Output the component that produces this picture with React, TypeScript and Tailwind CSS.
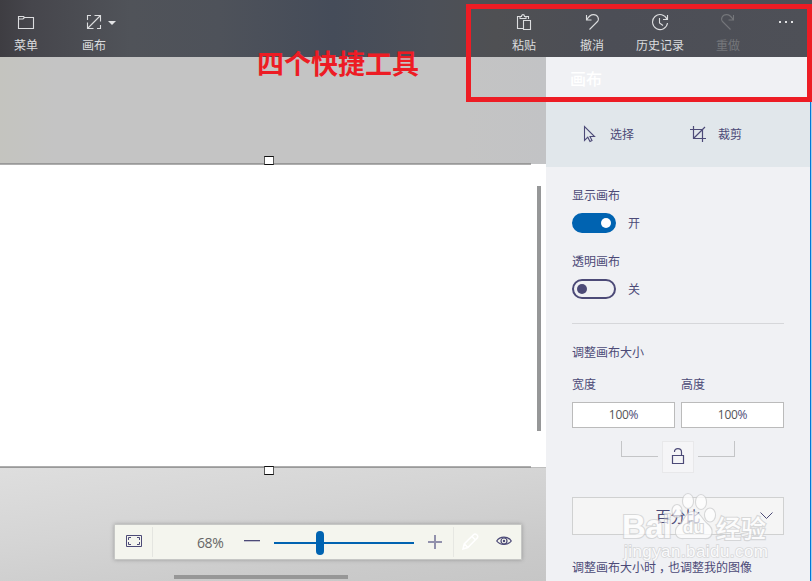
import type { ReactNode } from "react";

const ink = "#4c4a77";

function Tool({ label, muted, children }: { label: string; muted?: boolean; children: ReactNode }) {
  return (
    <button className={`flex w-[68px] flex-col items-center pt-3 ${muted ? "text-[#74767a]" : "text-[#dcdddf]"}`}>
      <span className="flex h-5 items-center">{children}</span>
      <span className="mt-1 text-[12px] leading-[18px]">{label}</span>
    </button>
  );
}

function Glyph({ children }: { children: ReactNode }) {
  return (
    <svg width="18" height="18" viewBox="0 0 18 18" fill="none" stroke="currentColor" strokeWidth="1.1">
      {children}
    </svg>
  );
}

function Header() {
  return (
    <header className="relative flex h-[57px] shrink-0 bg-[linear-gradient(90deg,#3e3d42_0%,#46464c_4%,#505359_16%,#4e525a_27%,#454c59_41%,#4c5058_53%,#4f5053_61%,#4c4e56_75%,#4e5057_100%)]">
      <div className="-ml-2 flex">
        <Tool label="菜单">
          <Glyph>
            <path d="M1.500 3.500h5l1 1h9v11h-15zM1.500 6h4.500l1.500-1.500" />
          </Glyph>
        </Tool>
        <div className="relative flex">
          <Tool label="画布">
            <Glyph>
              <path d="M2.500 7V2.500H6M9.500 2.500h6v6M15.500 12v3.500H12M8.500 15.500h-6v-6M3 15L15 3" />
            </Glyph>
          </Tool>
          <svg className="absolute left-12 top-[21px]" width="8" height="4" viewBox="0 0 8 4" fill="#e2e3e5">
            <path d="M0 0h8L4 4z" />
          </svg>
        </div>
      </div>
      <div className="ml-auto flex pr-[50px]">
        <Tool label="粘贴">
          <Glyph>
            <path d="M5 3.500H2.500v12H8M11 3.500h2.500V6M5 5.500v-2h1.500C6.500 1 9.500 1 9.500 3.500H11v2zM8.500 7.500h7v9h-7z" />
          </Glyph>
        </Tool>
        <Tool label="撤消">
          <Glyph>
            <path d="M3.500 2v5h5M3.700 6.700C6 3 8 1.500 10.500 1.600c4.300.1 6.500 4.400 3.500 7.400L6.500 16.500" />
          </Glyph>
        </Tool>
        <Tool label="历史记录">
          <Glyph>
            <path d="M16.500 2v4.500H12M16 6.200A7.500 7.500 0 1 0 16.500 10M8.500 5v5l3.500 2.500" />
          </Glyph>
        </Tool>
        <Tool label="重做" muted>
          <Glyph>
            <path d="M14.500 2v5h-5M14.300 6.700C12 3 10 1.500 7.500 1.600c-4.300.1-6.500 4.400-3.500 7.400L11.500 16.500" />
          </Glyph>
        </Tool>
      </div>
      <div className="absolute left-[779px] top-[21px] flex gap-1">
        <i className="size-[2px] bg-[#e2e3e5]" />
        <i className="size-[2px] bg-[#e2e3e5]" />
        <i className="size-[2px] bg-[#e2e3e5]" />
      </div>
    </header>
  );
}

function Handle({ className }: { className: string }) {
  return <i className={`absolute left-[264px] h-[9px] w-[10px] border border-x-[#555] border-y-[#111] bg-white ${className}`} />;
}

function ZoomBar() {
  return (
    <div className="ml-[114px] mt-[56px] flex h-[36px] w-[408px] items-center border border-[#c6c7c5] bg-[#f4f5ee] shadow-[0_0_4px_rgba(0,0,0,0.25)]">
      <div className="flex h-[30px] w-[38px] items-center justify-center border-r border-[#e4e5e0]">
        <svg width="16" height="12" viewBox="0 0 16 12" fill="none" stroke={ink} className="-mt-[2px]">
          <path d="M.5.500h15v11H.5zM2.500 5V2.500H5M11 2.500h2.500V5M13.500 7v2.500H11M5 9.500H2.500V7" />
        </svg>
      </div>
      <span className="ml-[44px] w-[29px] whitespace-nowrap pt-px font-['Open_Sans','Noto_Sans',sans-serif] text-[14px] leading-5 tracking-[-0.4px] text-[#666]">68%</span>
      <i className="-mt-[2px] ml-[18px] h-[2px] w-4 border-b border-[#c0bfcb] bg-[#4c4a77]" />
      <div className="relative ml-[14px] mt-[2px] h-[2px] w-[140px] bg-[#0063b1]">
        <i className="absolute -top-[11px] left-[42px] h-6 w-2 rounded-full bg-[#0063b1]" />
      </div>
      <svg className="ml-[14px]" width="14" height="14" viewBox="0 0 14 14" fill="none" stroke="#9291ac" strokeWidth="2">
        <path d="M7 0v14M0 7h14" />
      </svg>
      <div className="ml-[11px] flex h-[30px] grow items-center border-l border-[#e6e7e2]">
        <svg className="-mt-[2px] ml-2" width="17" height="17" viewBox="0 0 17 17" fill="none" stroke="#fff" strokeWidth="1.500">
          <path d="M1 16l1.200-5L11.500 1.700c2-2 5.500 1 3.700 3.400L5.800 14.500zM10 3.500l3.500 3.500M2.500 11l3.300 3.500" />
        </svg>
        <svg className="-mt-[2px] ml-[17px]" width="16" height="10" viewBox="0 0 16 10" fill="none" stroke={ink} strokeWidth="1.200">
          <path d="M.7 5C4-.1 12-.1 15.300 5 12 9.500 4 9.500.7 5z" />
          <circle cx="8" cy="5" r="3" />
          <circle cx="8" cy="5" r=".6" />
        </svg>
      </div>
    </div>
  );
}

function Workspace() {
  return (
    <main className="relative flex w-[546px] shrink-0 flex-col">
      <div className="h-[107px] shrink-0 bg-[linear-gradient(90deg,#c4c4bf_0%,#c4c4c4_10%,#c4c4c4_85%,#c2c3c5_100%)]" />
      <div className="relative h-[303px] shrink-0 bg-white">
        <i className="absolute -top-px left-0 h-[2px] w-[531px] border-t border-[#999] bg-[#aeaeae]" />
        <i className="absolute left-[537px] top-[22px] h-[245px] w-1 bg-[#969798]" />
        <i className="absolute bottom-[-1px] left-0 h-[2px] w-[531px] border-b border-[#999] bg-[#aeaeae]" />
        <Handle className="-top-[8px]" />
        <Handle className="-bottom-[8px]" />
      </div>
      <div className="grow border-t border-[#bebebe] bg-[linear-gradient(172deg,#dedede_0%,#d5d5d5_40%,#cacaca_80%,#c6c6c6_100%)]">
        <ZoomBar />
        <div className="ml-[174px] mt-[15px] h-1 w-[174px] bg-[#979797]" />
      </div>
    </main>
  );
}

function Toggle({ on, label }: { on?: boolean; label: string }) {
  return (
    <div className="flex h-5 items-center gap-3">
      <span className={`flex h-5 w-11 items-center rounded-full border-2 ${on ? "justify-end border-[#0063b1] bg-[#0063b1] pr-[3px]" : "border-[#4c4a77] pl-[3px]"}`}>
        <i className={`size-[10px] rounded-full ${on ? "bg-white" : "bg-[#4c4a77]"}`} />
      </span>
      <span>{label}</span>
    </div>
  );
}

function SizeField({ label }: { label: string }) {
  return (
    <label className="w-[103px]">
      <span className="block">{label}</span>
      <span className="mt-[9px] flex h-[26px] items-center justify-center border border-[#bbb] bg-white font-['Open_Sans','Noto_Sans',sans-serif] text-[12px] tracking-[-0.3px] text-[#555]">
        100<span className="text-[#4c4a77]">%</span>
      </span>
    </label>
  );
}

function Panel() {
  return (
    <aside className="flex w-[264px] shrink-0 flex-col bg-[#f0f1f4] text-[12px] leading-[18px] text-[#4c4a77]">
      <h2 className="h-[45px] shrink-0 pl-6 pt-[9px] text-[16px] font-medium leading-6 text-white">画布</h2>
      <div className="flex h-[65px] shrink-0 items-center bg-[#e1e7eb] pb-[2px] pl-[34px]">
        <svg width="18" height="18" viewBox="0 0 18 18" fill="none" stroke={ink} strokeWidth="1.100">
          <path d="M4.500 1.500v14l3.300-3.300L10 16.500l2-1-2-4h4.500z" />
        </svg>
        <span className="ml-3">选择</span>
        <svg className="ml-[55px]" width="18" height="18" viewBox="0 0 18 18" fill="none" stroke={ink} strokeWidth="1.200">
          <path d="M4.500 1v12.500H17M1 4.500h12.500V17M4.500 13.500L16 2" />
        </svg>
        <span className="ml-[11px]">裁剪</span>
      </div>
      <div className="flex flex-col pl-[26px] pt-[19px]">
        <span>显示画布</span>
        <div className="mt-[9px]"><Toggle on label="开" /></div>
        <span className="mt-[19px]">透明画布</span>
        <div className="mt-[9px]"><Toggle label="关" /></div>
        <hr className="mt-6 w-[212px] border-[#d6d7da]" />
        <span className="mt-[19px]">调整画布大小</span>
        <div className="mt-[14px] flex gap-[6px]">
          <SizeField label="宽度" />
          <SizeField label="高度" />
        </div>
        <div className="ml-[49px] mt-[13px] flex h-8">
          <i className="h-4 w-[37px] border-b border-l border-[#c4c5c7]" />
          <span className="ml-1 flex size-8 items-center justify-center border border-[#e8e8ea] bg-[#f5f5f7] pb-[2px]">
            <svg width="14" height="18" viewBox="0 0 14 18" fill="none" stroke={ink} strokeWidth="1.200">
              <path d="M1.500 8.500h11v8h-11zM3.500 5C3 .5 10.500.5 10.500 5v3.500" />
            </svg>
          </span>
          <i className="ml-1 h-4 w-[37px] border-b border-r border-[#c4c5c7]" />
        </div>
        <div className="relative mt-6 flex h-[38px] w-[212px] items-center justify-center border border-[#d0d1d1] bg-[#f5f5f5] pb-px text-[15px]">
          <span>百分比</span>
          <svg className="absolute right-[10px] top-[14px]" width="13" height="8" viewBox="0 0 13 8" fill="none" stroke={ink}>
            <path d="M.5.500l6 6 6-6" />
          </svg>
        </div>
        <span className="mt-[23px] whitespace-nowrap">
          调整画布大小时<span className="inline-block translate-x-[3px]">，</span>也调整我的图像
        </span>
      </div>
    </aside>
  );
}

function Watermark() {
  return (
    <svg className="absolute left-[618px] top-[490px] opacity-70" width="160" height="80" viewBox="0 0 160 80" fill="#fff" stroke="#cbcccd" strokeWidth="2.200" paintOrder="stroke">
      <g>
        <ellipse cx="59" cy="21" rx="4.500" ry="6" />
        <ellipse cx="70" cy="11" rx="5" ry="7" />
        <ellipse cx="83" cy="12" rx="5" ry="7" />
        <ellipse cx="92" cy="25" rx="5" ry="6.500" />
        <path d="M75 22c-7 0-8 8-12 12-8 5-6 15 3 14h20c9 1 10-9 3-14-5-4-7-12-14-12z" />
      </g>
      <text x="4" y="48" textLength="50" fontFamily="Liberation Sans, sans-serif" fontWeight="700" fontSize="33">Bai</text>
      <text x="65" y="43" textLength="21" fontFamily="Liberation Sans, sans-serif" fontWeight="700" fontSize="17">du</text>
      <text x="98" y="48" textLength="50" fontFamily="Noto Sans CJK SC, sans-serif" fontWeight="500" fontSize="25">经验</text>
      <text x="6" y="67" textLength="144" strokeWidth="1.500" fontFamily="Liberation Sans, sans-serif" fontSize="17">jingyan.baidu.com</text>
    </svg>
  );
}

export default function App() {
  return (
    <div className="relative flex h-[581px] w-[812px] flex-col overflow-hidden font-['Noto_Sans_CJK_SC',sans-serif]">
      <Header />
      <div className="flex min-h-0 grow">
        <Workspace />
        <Panel />
        <i className="w-[2px] border-l border-[#0078d7] bg-[#a7cdec]" />
      </div>
      <p className="absolute left-[257px] top-[43px] whitespace-nowrap text-[27px] font-bold leading-10 text-[#ed1c24]">四个快捷工具</p>
      <div className="absolute left-[466px] top-1 h-[98px] w-[346px] border-[5px] border-[#ed1c24]" />
      <Watermark />
    </div>
  );
}
